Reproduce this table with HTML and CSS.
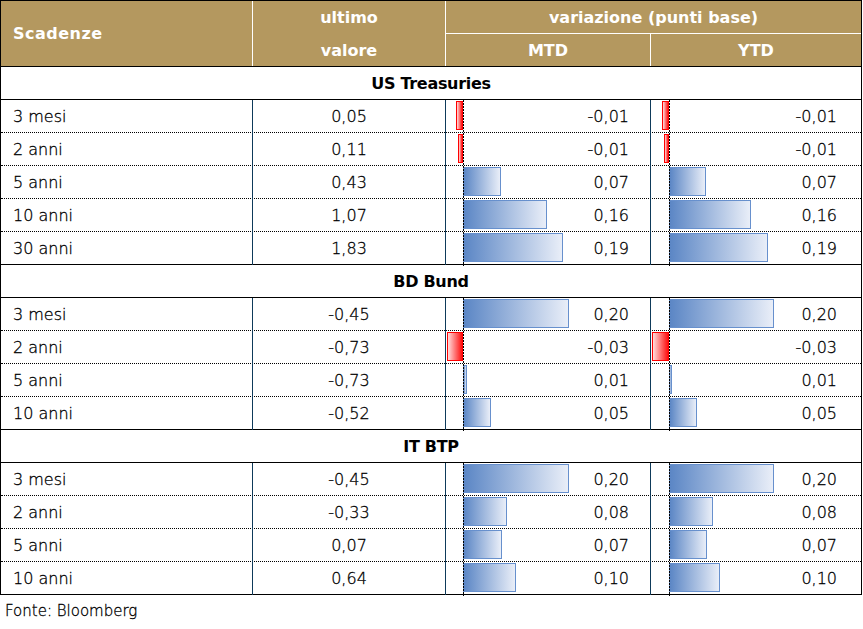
FILE: index.html
```html
<!DOCTYPE html>
<html lang="it">
<head>
<meta charset="utf-8">
<title>Scadenze</title>
<link rel="stylesheet" href="styles.css">
</head>
<body>
<div class="report">
  <div class="table">
    <div class="head">
      <div class="h-scad">Scadenze</div>
      <div class="h-val">ultimo<br>valore</div>
      <div class="h-var">
        <div class="h-var-title">variazione (punti base)</div>
        <div class="h-var-sub">
          <div class="h-mtd">MTD</div>
          <div class="h-ytd">YTD</div>
        </div>
      </div>
    </div>

    <div class="section">US Treasuries</div>
    <div class="row">
      <div class="c-name">3 mesi</div><div class="c-val">0,05</div>
      <div class="c-var mtd"><div class="neg"><span class="bar bar-neg" style="width:7px"></span></div><div class="pos"><span class="num">-0,01</span></div></div>
      <div class="c-var ytd"><div class="neg"><span class="bar bar-neg" style="width:7px"></span></div><div class="pos"><span class="num">-0,01</span></div></div>
    </div>
    <div class="row">
      <div class="c-name">2 anni</div><div class="c-val">0,11</div>
      <div class="c-var mtd"><div class="neg"><span class="bar bar-neg" style="width:5px"></span></div><div class="pos"><span class="num">-0,01</span></div></div>
      <div class="c-var ytd"><div class="neg"><span class="bar bar-neg" style="width:5px"></span></div><div class="pos"><span class="num">-0,01</span></div></div>
    </div>
    <div class="row">
      <div class="c-name">5 anni</div><div class="c-val">0,43</div>
      <div class="c-var mtd"><div class="neg"></div><div class="pos"><span class="bar bar-pos" style="width:38px"></span><span class="num">0,07</span></div></div>
      <div class="c-var ytd"><div class="neg"></div><div class="pos"><span class="bar bar-pos" style="width:37px"></span><span class="num">0,07</span></div></div>
    </div>
    <div class="row">
      <div class="c-name">10 anni</div><div class="c-val">1,07</div>
      <div class="c-var mtd"><div class="neg"></div><div class="pos"><span class="bar bar-pos" style="width:84px"></span><span class="num">0,16</span></div></div>
      <div class="c-var ytd"><div class="neg"></div><div class="pos"><span class="bar bar-pos" style="width:82px"></span><span class="num">0,16</span></div></div>
    </div>
    <div class="row last">
      <div class="c-name">30 anni</div><div class="c-val">1,83</div>
      <div class="c-var mtd"><div class="neg"></div><div class="pos"><span class="bar bar-pos" style="width:100px"></span><span class="num">0,19</span></div></div>
      <div class="c-var ytd"><div class="neg"></div><div class="pos"><span class="bar bar-pos" style="width:99px"></span><span class="num">0,19</span></div></div>
    </div>

    <div class="section">BD Bund</div>
    <div class="row">
      <div class="c-name">3 mesi</div><div class="c-val">-0,45</div>
      <div class="c-var mtd"><div class="neg"></div><div class="pos"><span class="bar bar-pos" style="width:106px"></span><span class="num">0,20</span></div></div>
      <div class="c-var ytd"><div class="neg"></div><div class="pos"><span class="bar bar-pos" style="width:105px"></span><span class="num">0,20</span></div></div>
    </div>
    <div class="row">
      <div class="c-name">2 anni</div><div class="c-val">-0,73</div>
      <div class="c-var mtd"><div class="neg"><span class="bar bar-neg" style="width:16px"></span></div><div class="pos"><span class="num">-0,03</span></div></div>
      <div class="c-var ytd"><div class="neg"><span class="bar bar-neg" style="width:17px"></span></div><div class="pos"><span class="num">-0,03</span></div></div>
    </div>
    <div class="row">
      <div class="c-name">5 anni</div><div class="c-val">-0,73</div>
      <div class="c-var mtd"><div class="neg"></div><div class="pos"><span class="bar bar-pos" style="width:4px"></span><span class="num">0,01</span></div></div>
      <div class="c-var ytd"><div class="neg"></div><div class="pos"><span class="bar bar-pos" style="width:3px"></span><span class="num">0,01</span></div></div>
    </div>
    <div class="row last">
      <div class="c-name">10 anni</div><div class="c-val">-0,52</div>
      <div class="c-var mtd"><div class="neg"></div><div class="pos"><span class="bar bar-pos" style="width:28px"></span><span class="num">0,05</span></div></div>
      <div class="c-var ytd"><div class="neg"></div><div class="pos"><span class="bar bar-pos" style="width:28px"></span><span class="num">0,05</span></div></div>
    </div>

    <div class="section">IT BTP</div>
    <div class="row">
      <div class="c-name">3 mesi</div><div class="c-val">-0,45</div>
      <div class="c-var mtd"><div class="neg"></div><div class="pos"><span class="bar bar-pos" style="width:106px"></span><span class="num">0,20</span></div></div>
      <div class="c-var ytd"><div class="neg"></div><div class="pos"><span class="bar bar-pos" style="width:105px"></span><span class="num">0,20</span></div></div>
    </div>
    <div class="row">
      <div class="c-name">2 anni</div><div class="c-val">-0,33</div>
      <div class="c-var mtd"><div class="neg"></div><div class="pos"><span class="bar bar-pos" style="width:44px"></span><span class="num">0,08</span></div></div>
      <div class="c-var ytd"><div class="neg"></div><div class="pos"><span class="bar bar-pos" style="width:44px"></span><span class="num">0,08</span></div></div>
    </div>
    <div class="row">
      <div class="c-name">5 anni</div><div class="c-val">0,07</div>
      <div class="c-var mtd"><div class="neg"></div><div class="pos"><span class="bar bar-pos" style="width:39px"></span><span class="num">0,07</span></div></div>
      <div class="c-var ytd"><div class="neg"></div><div class="pos"><span class="bar bar-pos" style="width:38px"></span><span class="num">0,07</span></div></div>
    </div>
    <div class="row final">
      <div class="c-name">10 anni</div><div class="c-val">0,64</div>
      <div class="c-var mtd"><div class="neg"></div><div class="pos"><span class="bar bar-pos" style="width:53px"></span><span class="num">0,10</span></div></div>
      <div class="c-var ytd"><div class="neg"></div><div class="pos"><span class="bar bar-pos" style="width:51px"></span><span class="num">0,10</span></div></div>
    </div>
  </div>
  <p class="source">Fonte: Bloomberg</p>
</div>
</body>
</html>
```

FILE: styles.css
```css
html, body {
  margin: 0;
  padding: 0;
  background: #ffffff;
}

body {
  font-family: "DejaVu Sans", "Liberation Sans", sans-serif;
  font-size: 16px;
  color: #000000;
}

.report {
  width: 862px;
}

.table {
  width: 862px;
  box-sizing: border-box;
  border: 1px solid #000000;
}

/* ---------- header ---------- */
.head {
  display: grid;
  grid-template-columns: 251px 193px 416px;
  background: #b4985f;
  color: #ffffff;
  font-weight: bold;
  border-bottom: 1px solid #000000;
}

.h-scad {
  height: 65px;
  line-height: 65px;
  padding-left: 12px;
  letter-spacing: 0.5px;
}

.h-val {
  box-sizing: border-box;
  border-left: 1px solid #ffffff;
  text-align: center;
  line-height: 33px;
  height: 65px;
}

.h-var {
  box-sizing: border-box;
  border-left: 1px solid #ffffff;
  display: flex;
  flex-direction: column;
}

.h-var-title {
  height: 32px;
  line-height: 33px;
  text-align: center;
  border-bottom: 1px solid #ffffff;
}

.h-var-sub {
  display: flex;
  height: 32px;
  line-height: 33px;
}

.h-mtd {
  width: 204px;
  text-align: center;
}

.h-ytd {
  flex: 1;
  border-left: 1px solid #ffffff;
  text-align: center;
}

/* ---------- section titles ---------- */
.section {
  height: 33px;
  box-sizing: border-box;
  border-bottom: 1px solid #000000;
  line-height: 33px;
  text-align: center;
  font-weight: bold;
  letter-spacing: -0.3px;
}

/* ---------- data rows ---------- */
.row {
  display: grid;
  grid-template-columns: 251px 193px 205px 211px;
  height: 33px;
  box-sizing: border-box;
  border-bottom: 1px dotted #000000;
  font-weight: 200;
  -webkit-text-stroke: 0.3px #000000;
}

.row.last {
  border-bottom: 1px solid #000000;
}

.row.final {
  height: 32px;
  border-bottom: none;
}

.c-name {
  padding-left: 12px;
  line-height: 33px;
}

.c-val {
  box-sizing: border-box;
  border-left: 1px solid #0e3a5a;
  text-align: center;
  line-height: 33px;
}

.c-var {
  box-sizing: border-box;
  border-left: 1px solid #0e3a5a;
  display: flex;
}

.c-var .neg {
  display: flex;
  justify-content: flex-end;
  align-items: flex-start;
}

.mtd .neg {
  width: 17px;
}

.ytd .neg {
  width: 18px;
}

.c-var .pos {
  flex: 1;
  display: flex;
  align-items: flex-start;
  position: relative;
}

.c-var .pos::before {
  content: "";
  position: absolute;
  left: 0;
  top: 0;
  bottom: -1px;
  width: 1px;
  background: repeating-linear-gradient(to bottom, #000000 0, #000000 2px, transparent 2px, transparent 3px);
  z-index: 1;
}

.mtd .pos {
  padding-right: 21px;
}

.ytd .pos {
  padding-right: 24px;
}

.bar {
  display: block;
  box-sizing: border-box;
  height: 29px;
  margin-top: 1px;
}

.bar-pos {
  background: linear-gradient(to right, #5b86c5, #e9eef8);
  border: 1px solid #6790cd;
}

.bar-neg {
  background: linear-gradient(to right, #ffdcdc, #ff1010);
  border: 1px solid #ff0000;
}

.num {
  margin-left: auto;
  line-height: 33px;
}

/* ---------- footer ---------- */
.source {
  margin: 5px 0 0 5px;
  font-size: 15px;
  line-height: 22px;
  font-weight: 200;
  -webkit-text-stroke: 0.3px #000000;
}
```
